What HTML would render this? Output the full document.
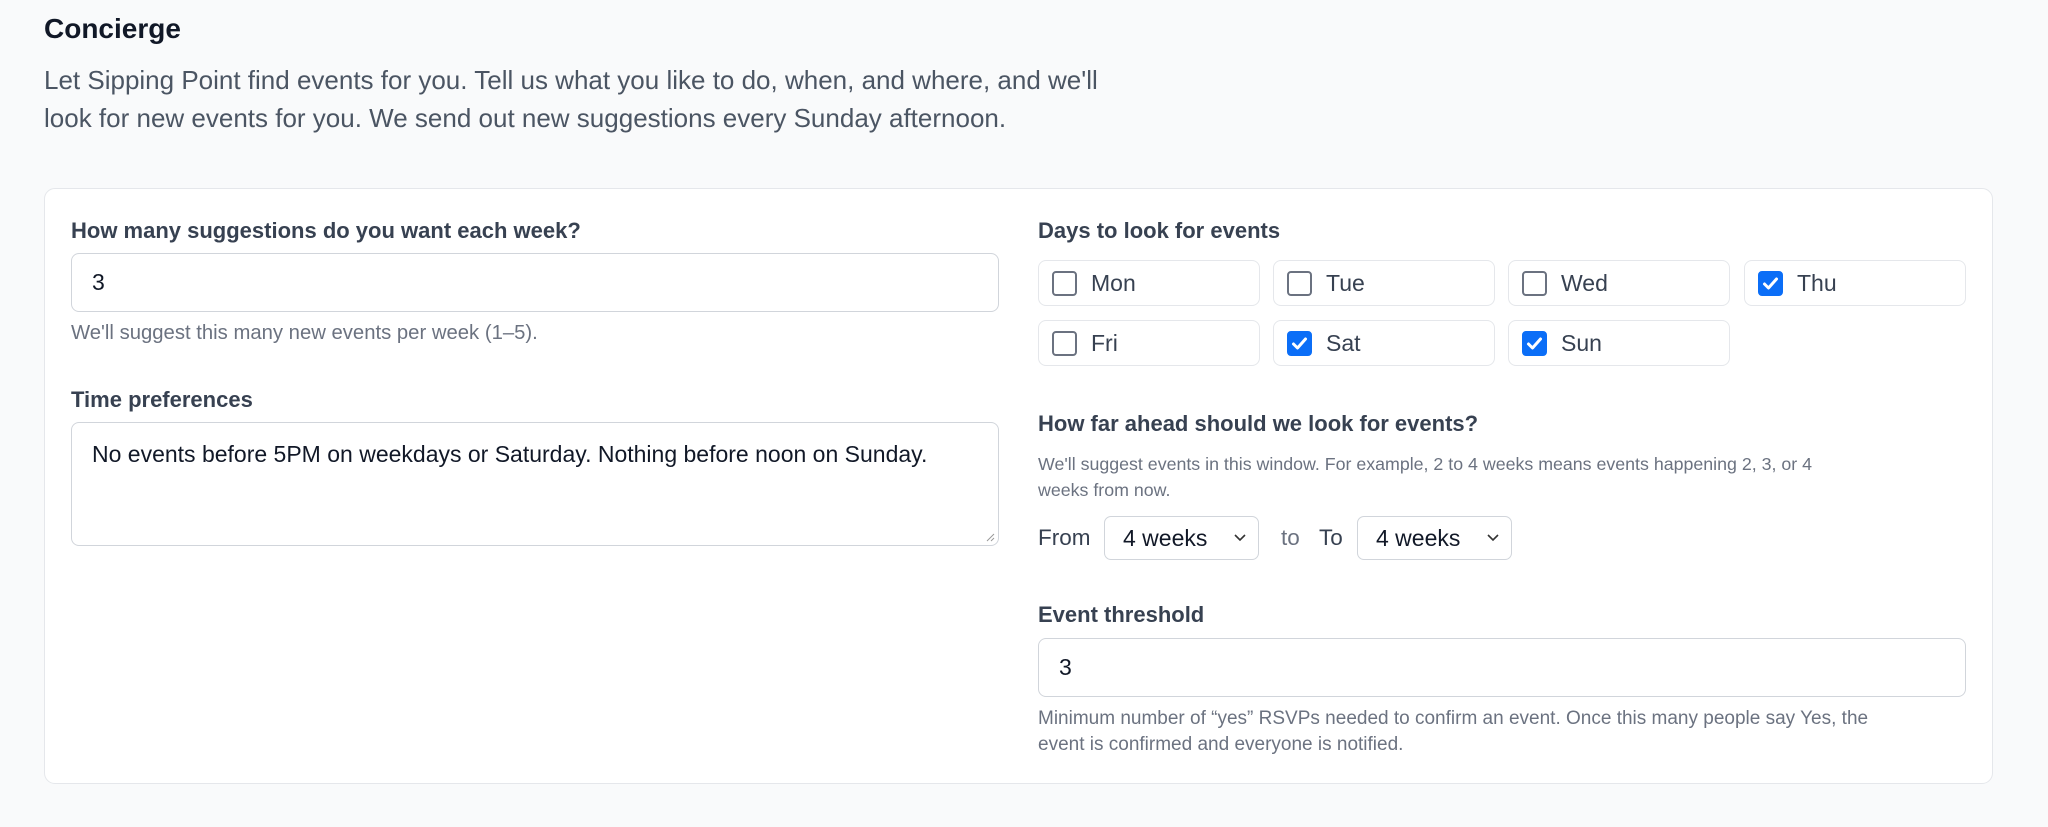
<!DOCTYPE html>
<html><head><meta charset="utf-8"><style>
*{box-sizing:border-box;margin:0;padding:0}
body{width:2048px;height:827px;background:#f9fafb;font-family:"Liberation Sans",Arial,sans-serif;position:relative;overflow:hidden;color:#111827}
.a{position:absolute;white-space:nowrap}
h1{position:absolute;left:44px;top:13px;font-size:28px;font-weight:bold;color:#111827}
.p{left:44px;font-size:26px;color:#4b5563}
.card{position:absolute;left:44px;top:188px;width:1949px;height:596px;background:#fff;border:1px solid #e5e7eb;border-radius:11px}
.lbl{font-size:22px;font-weight:bold;color:#374151}
.inp{position:absolute;background:#fff;border:1.5px solid #d1d5db;border-radius:8px;font-size:23px;color:#111827}
.help{font-size:17.8px;color:#6b7280}
.day{position:absolute;width:222px;height:46px;border:1.5px solid #e5e7eb;border-radius:8px;background:#fff}
.cb{position:absolute;left:13px;top:10px;width:25px;height:25px;border:2px solid #6b7280;border-radius:4px;background:#fff}
.cb.on{background:#0b6ef7;border-color:#0b6ef7}
.day span{position:absolute;left:52px;top:9px;font-size:23px;color:#374151}
.sel{position:absolute;height:44px;border:1.5px solid #d1d5db;border-radius:7px;background:#fff;font-size:23px}
.sel span{position:absolute;left:18px;top:8px}
.sel svg{position:absolute;right:12px;top:17px}
</style></head><body>
<h1>Concierge</h1>
<div class="a p" style="top:65px">Let Sipping Point find events for you. Tell us what you like to do, when, and where, and we'll</div>
<div class="a p" style="top:103px">look for new events for you. We send out new suggestions every Sunday afternoon.</div>
<div class="card"></div>

<div class="a lbl" style="left:71px;top:218px">How many suggestions do you want each week?</div>
<div class="inp" style="left:71px;top:253px;width:928px;height:59px"><span class="a" style="left:20px;top:15px">3</span></div>
<div class="a help" style="left:71px;top:322px;font-size:20.3px">We'll suggest this many new events per week (1–5).</div>
<div class="a lbl" style="left:71px;top:387px">Time preferences</div>
<div class="inp" style="left:71px;top:422px;width:928px;height:124px"><span class="a" style="left:20px;top:18px">No events before 5PM on weekdays or Saturday. Nothing before noon on Sunday.</span>
<svg class="a" style="right:3px;bottom:3px" width="10" height="10"><path d="M9 2L2 9M9 6L6 9" stroke="#999" stroke-width="1"/></svg></div>

<div class="a lbl" style="left:1038px;top:218px">Days to look for events</div>
<div class="day" style="left:1038px;top:260px"><div class="cb"></div><span>Mon</span></div>
<div class="day" style="left:1273px;top:260px"><div class="cb"></div><span>Tue</span></div>
<div class="day" style="left:1508px;top:260px"><div class="cb"></div><span>Wed</span></div>
<div class="day" style="left:1744px;top:260px"><div class="cb on"><svg width="21" height="21" style="position:absolute;left:0;top:0"><path d="M4.5 11l4 4 8-9" stroke="#fff" stroke-width="3" fill="none" stroke-linecap="round" stroke-linejoin="round"/></svg></div><span>Thu</span></div>
<div class="day" style="left:1038px;top:320px"><div class="cb"></div><span>Fri</span></div>
<div class="day" style="left:1273px;top:320px"><div class="cb on"><svg width="21" height="21" style="position:absolute;left:0;top:0"><path d="M4.5 11l4 4 8-9" stroke="#fff" stroke-width="3" fill="none" stroke-linecap="round" stroke-linejoin="round"/></svg></div><span>Sat</span></div>
<div class="day" style="left:1508px;top:320px"><div class="cb on"><svg width="21" height="21" style="position:absolute;left:0;top:0"><path d="M4.5 11l4 4 8-9" stroke="#fff" stroke-width="3" fill="none" stroke-linecap="round" stroke-linejoin="round"/></svg></div><span>Sun</span></div>

<div class="a lbl" style="left:1038px;top:411px">How far ahead should we look for events?</div>
<div class="a help" style="left:1038px;top:454px">We'll suggest events in this window. For example, 2 to 4 weeks means events happening 2, 3, or 4</div>
<div class="a help" style="left:1038px;top:480px">weeks from now.</div>
<div class="a" style="left:1038px;top:525px;font-size:22.5px;color:#374151">From</div>
<div class="sel" style="left:1104px;top:516px;width:155px"><span>4 weeks</span><svg width="12" height="8"><path d="M1 1l5 5 5-5" stroke="#333" stroke-width="1.6" fill="none"/></svg></div>
<div class="a" style="left:1281px;top:525px;font-size:22.5px;color:#6b7280">to</div>
<div class="a" style="left:1319px;top:525px;font-size:22.5px;color:#374151">To</div>
<div class="sel" style="left:1357px;top:516px;width:155px"><span>4 weeks</span><svg width="12" height="8"><path d="M1 1l5 5 5-5" stroke="#333" stroke-width="1.6" fill="none"/></svg></div>

<div class="a lbl" style="left:1038px;top:602px">Event threshold</div>
<div class="inp" style="left:1038px;top:638px;width:928px;height:59px"><span class="a" style="left:20px;top:15px">3</span></div>
<div class="a help" style="left:1038px;top:708px;font-size:19px">Minimum number of “yes” RSVPs needed to confirm an event. Once this many people say Yes, the</div>
<div class="a help" style="left:1038px;top:734px;font-size:19px">event is confirmed and everyone is notified.</div>
</body></html>
